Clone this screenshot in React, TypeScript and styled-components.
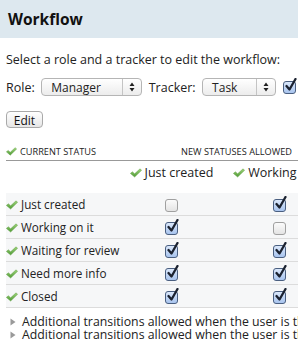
import React from "react";
import styled, { createGlobalStyle } from "styled-components";

const GlobalStyle = createGlobalStyle`
  html, body {
    margin: 0;
    padding: 0;
    overflow: hidden;
    background: #fff;
  }
  body {
    font-family: "Open Sans", "DejaVu Sans", sans-serif;
    font-size: 12.5px;
    color: #222;
  }
`;

const Page = styled.div`
  width: 298px;
  height: 350px;
  overflow: hidden;
`;

const TitleBar = styled.div`
  height: 38px;
  background: #dde8ef;
  display: flex;
  align-items: center;
  padding-left: 8px;
`;

const Title = styled.h2`
  margin: 0;
  font-size: 15.5px;
  font-weight: 700;
  color: #111;
`;

const Content = styled.div`
  padding: 0 0 0 6px;
`;

const Intro = styled.p`
  margin: 14px 0 0;
  line-height: 16px;
  white-space: nowrap;
`;

const FilterRow = styled.div`
  display: flex;
  align-items: center;
  gap: 6.5px;
  margin-top: 10px;
  height: 18px;
  white-space: nowrap;
`;

const SelectBox = styled.div<{ $w: number }>`
  width: ${(p) => p.$w}px;
  height: 18px;
  box-sizing: border-box;
  border: 1px solid #b5b5b5;
  border-radius: 4px;
  background: linear-gradient(#ffffff, #ececec);
  display: flex;
  align-items: center;
  font-size: 12px;
  padding-left: 9px;
  flex-shrink: 0;
`;

const SelectLabel = styled.span`
  flex: 1;
`;

const SelectArrows = styled.span`
  width: 18px;
  height: 100%;
  border-left: 1px solid #c4c4c4;
  display: flex;
  align-items: center;
  justify-content: center;
`;

const EditButton = styled.button`
  margin-top: 15px;
  width: 37px;
  height: 17px;
  padding: 0;
  border: 1px solid #a9a9a9;
  border-radius: 4px;
  background: linear-gradient(#ffffff, #e6e6e6);
  font-family: inherit;
  font-size: 12px;
  color: #111;
  display: block;
`;

const Table = styled.table`
  margin-top: 14px;
  border-collapse: collapse;
  table-layout: fixed;
  width: 330px;
`;

const HeadCell = styled.th<{ $pad?: number }>`
  font-size: 9.2px;
  font-weight: 400;
  text-transform: uppercase;
  text-align: left;
  height: 16px;
  line-height: 12px;
  padding: 0 0 2px ${(p) => p.$pad ?? 0}px;
  border-bottom: 1px solid #999;
  color: #222;
  white-space: nowrap;
  vertical-align: bottom;
`;

const StatusHead = styled.td`
  text-align: center;
  height: 22px;
  padding: 0;
  font-size: 12.5px;
  white-space: nowrap;
  vertical-align: middle;
`;

const Spacer = styled.td`
  height: 10px;
  padding: 0;
`;

const Row = styled.tr`
  background: #f6f7f8;
  border-bottom: 1px solid #dcdcdc;
`;

const NameCell = styled.td`
  height: 22px;
  padding: 0;
  font-size: 11.7px;
  white-space: nowrap;
`;

const BoxCell = styled.td`
  text-align: center;
  padding: 0;
`;

const Extra = styled.div`
  margin-top: 7px;
  display: flex;
  flex-direction: column;
`;

const ExtraLine = styled.div`
  display: flex;
  align-items: center;
  gap: 6px;
  height: 13px;
  line-height: 13px;
  padding-left: 4px;
  white-space: nowrap;
  font-size: 12.3px;
`;

const TickIcon = styled.svg`
  margin-right: 3px;
  vertical-align: -1px;
  flex-shrink: 0;
`;

const Tick = ({ size = 12 }: { size?: number }) => (
  <TickIcon width={size} height={Math.round(size * 0.8)} viewBox="0 0 15 12">
    <defs>
      <linearGradient id="tg" x1="0" y1="0" x2="0" y2="1">
        <stop offset="0" stopColor="#9fd47b" />
        <stop offset="1" stopColor="#4f9a35" />
      </linearGradient>
    </defs>
    <path d="M0.5 6.5 L3 4.5 L5.8 7 L12.5 0.8 L14.5 2.6 L5.8 11 Z" fill="url(#tg)" stroke="#5f9f43" strokeWidth="0.6" />
  </TickIcon>
);

const BoxWrap = styled.span<{ $on: boolean }>`
  display: inline-block;
  position: relative;
  width: 11px;
  height: 11px;
  border: 1px solid ${(p) => (p.$on ? "#4a5f80" : "#a0a0a0")};
  border-radius: 3px;
  background: ${(p) => (p.$on ? "linear-gradient(#dbe8fb, #a8c4ee)" : "linear-gradient(#fbfbfb, #e4e4e4)")};
  vertical-align: middle;
  flex-shrink: 0;
`;

const CheckMark = styled.svg`
  position: absolute;
  left: 1px;
  top: -4px;
`;

const Box = ({ on }: { on: boolean }) => (
  <BoxWrap $on={on}>
    {on && (
      <CheckMark width="12" height="14" viewBox="0 0 12 14">
        <path d="M1.5 8 L4.5 11.5 L10.5 1" fill="none" stroke="#1b2230" strokeWidth="2.3" strokeLinecap="round" strokeLinejoin="round" />
      </CheckMark>
    )}
  </BoxWrap>
);

const Arrows = () => (
  <svg width="6" height="10" viewBox="0 0 6 10">
    <path d="M3 0.5 L5.5 4 L0.5 4 Z M3 9.5 L5.5 6 L0.5 6 Z" fill="#222" />
  </svg>
);

const TriangleIcon = styled.svg`
  flex-shrink: 0;
`;

const Triangle = () => (
  <TriangleIcon width="6" height="8" viewBox="0 0 6 8">
    <path d="M0.5 0.5 L5.5 4 L0.5 7.5 Z" fill="#9a9a9a" />
  </TriangleIcon>
);

const statuses = [
  { name: "Just created", a: false, b: true },
  { name: "Working on it", a: true, b: false },
  { name: "Waiting for review", a: true, b: true },
  { name: "Need more info", a: true, b: true },
  { name: "Closed", a: true, b: true },
];

const App = () => {
  return (
    <Page>
      <GlobalStyle />
      <TitleBar>
        <Title>Workflow</Title>
      </TitleBar>
      <Content>
        <Intro>Select a role and a tracker to edit the workflow:</Intro>
        <FilterRow>
          <span>Role:</span>
          <SelectBox $w={101}>
            <SelectLabel>Manager</SelectLabel>
            <SelectArrows><Arrows /></SelectArrows>
          </SelectBox>
          <span>Tracker:</span>
          <SelectBox $w={74}>
            <SelectLabel>Task</SelectLabel>
            <SelectArrows><Arrows /></SelectArrows>
          </SelectBox>
          <Box on={true} />
        </FilterRow>
        <EditButton>Edit</EditButton>
        <Table>
          <colgroup>
            <col style={{ width: 114 }} />
            <col style={{ width: 103 }} />
            <col style={{ width: 113 }} />
          </colgroup>
          <thead>
            <tr>
              <HeadCell><Tick size={11} />Current status</HeadCell>
              <HeadCell colSpan={2} $pad={61}>New statuses allowed</HeadCell>
            </tr>
          </thead>
          <tbody>
            <tr>
              <td />
              <StatusHead><Tick />Just created</StatusHead>
              <StatusHead><Tick />Working on it</StatusHead>
            </tr>
            <tr>
              <Spacer colSpan={3} />
            </tr>
            {statuses.map((s) => (
              <Row key={s.name}>
                <NameCell><Tick />{s.name}</NameCell>
                <BoxCell><Box on={s.a} /></BoxCell>
                <BoxCell><Box on={s.b} /></BoxCell>
              </Row>
            ))}
          </tbody>
        </Table>
        <Extra>
          <ExtraLine><Triangle />Additional transitions allowed when the user is the author</ExtraLine>
          <ExtraLine><Triangle />Additional transitions allowed when the user is the assignee</ExtraLine>
        </Extra>
      </Content>
    </Page>
  );
};

export default App;
